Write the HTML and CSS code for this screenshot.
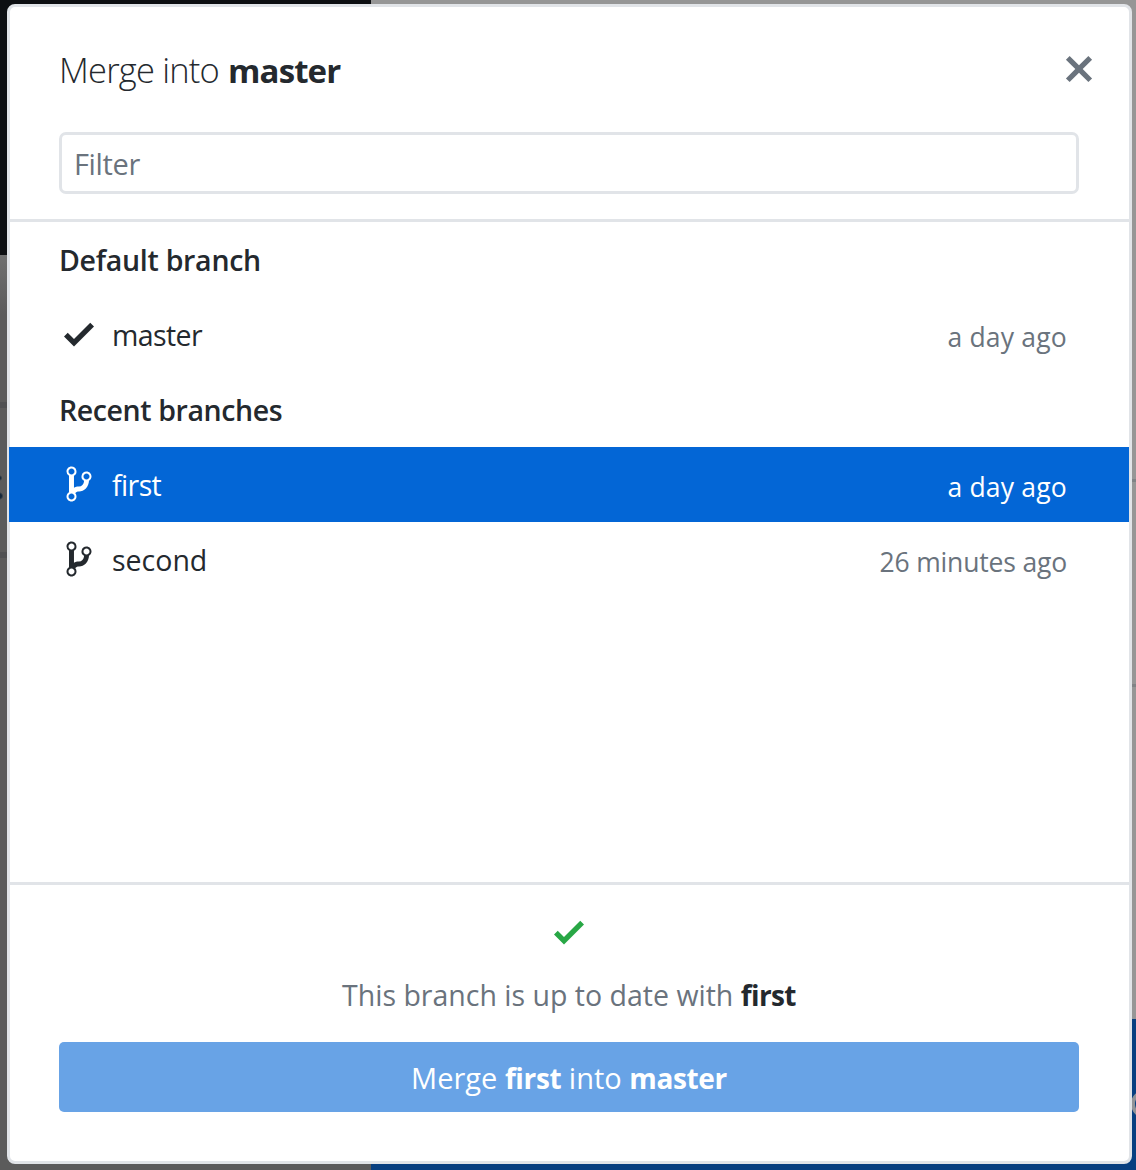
FILE: index.html
```html
<!DOCTYPE html>
<html lang="en">
<head>
<meta charset="utf-8">
<title>Merge into master</title>
<link rel="stylesheet" href="styles.css">
</head>
<body>
<svg width="0" height="0" class="symbols">
  <symbol id="check" viewBox="0 0 12 16"><path d="M12 5l-8 8-4-4 1.5-1.5L4 10l6.5-6.5L12 5z"/></symbol>
  <symbol id="x" viewBox="0 0 12 16"><path d="M7.48 8l3.75 3.75-1.48 1.48L6 9.48l-3.75 3.75-1.48-1.48L4.52 8 .77 4.25l1.48-1.48L6 6.52l3.75-3.75 1.48 1.48z"/></symbol>
  <symbol id="branch" viewBox="0 0 10 16"><path fill-rule="evenodd" d="M10 5c0-1.11-.89-2-2-2a1.993 1.993 0 0 0-1 3.72v.3c-.02.52-.23.98-.63 1.38-.4.4-.86.61-1.38.63-.83.02-1.48.16-2 .45V4.72a1.993 1.993 0 0 0-1-3.72C.88 1 0 1.89 0 3a2 2 0 0 0 1 1.72v6.56c-.59.35-1 .99-1 1.72 0 1.11.89 2 2 2 1.11 0 2-.89 2-2 0-.53-.2-1-.53-1.36.09-.06.48-.41.59-.47.25-.11.56-.17.94-.17 1.05-.05 1.95-.45 2.75-1.25S8.95 7.77 9 6.73h-.02C9.59 6.37 10 5.73 10 5zM2 1.8c.66 0 1.2.55 1.2 1.2 0 .65-.55 1.2-1.2 1.2C1.35 4.2.8 3.65.8 3c0-.65.55-1.2 1.2-1.2zm0 12.41c-.66 0-1.2-.55-1.2-1.2 0-.65.55-1.2 1.2-1.2.65 0 1.2.55 1.2 1.2 0 .65-.55 1.2-1.2 1.2zm6-8c-.66 0-1.2-.55-1.2-1.2 0-.65.55-1.2 1.2-1.2.65 0 1.2.55 1.2 1.2 0 .65-.55 1.2-1.2 1.2z"/></symbol>
</svg>
<div class="backdrop">
  <span class="backdrop-ring"></span>
  <main class="dialog">
    <header class="dialog-header">
      <div class="title-row">
        <h1 class="title">Merge into <strong>master</strong></h1>
        <button class="close" aria-label="Close"><svg class="icon"><use href="#x"/></svg></button>
      </div>
      <input class="filter" type="text" placeholder="Filter">
    </header>
    <section class="list">
      <h2 class="group">Default branch</h2>
      <div class="row">
        <span class="row-icon"><svg class="icon"><use href="#check"/></svg></span>
        <span class="name tight">master</span>
        <span class="time">a day ago</span>
      </div>
      <h2 class="group recent">Recent branches</h2>
      <div class="row selected">
        <span class="row-icon"><svg class="icon"><use href="#branch"/></svg></span>
        <span class="name tight">first</span>
        <span class="time">a day ago</span>
      </div>
      <div class="row">
        <span class="row-icon"><svg class="icon"><use href="#branch"/></svg></span>
        <span class="name">second</span>
        <span class="time long">26 minutes ago</span>
      </div>
    </section>
    <footer class="dialog-footer">
      <svg class="icon status-icon"><use href="#check"/></svg>
      <p class="status">This branch is up to date with <strong>first</strong></p>
      <button class="merge"><span>Merge <strong>first</strong> into <strong>master</strong></span></button>
    </footer>
  </main>
</div>
</body>
</html>
```
FILE: styles.css
```css
* { box-sizing: border-box; }

body {
  margin: 0;
  color: #24292e;
  font-family: "Open Sans", "Noto Sans", sans-serif;
  font-size: 28.5px;
}

h1, h2, p { margin: 0; }

strong { font-weight: 700; }

button {
  padding: 0;
  border: 0;
  font: inherit;
}

.symbols { position: absolute; }

.icon {
  display: block;
  width: 30px;
  height: 40px;
  fill: currentColor;
}

.backdrop {
  position: relative;
  width: 1136px;
  height: 1170px;
  padding: 4px 4px 6px 7px;
  overflow: hidden;
  background:
    linear-gradient(#0d0f12, #0d0f12) 0 0 / 371px 255px no-repeat,
    linear-gradient(#505153, #505153) 0 402px / 8px 6px no-repeat,
    radial-gradient(circle, #14273a 1px, transparent 3px) -4px 474px / 7px 8px no-repeat,
    radial-gradient(circle, #14273a 2px, transparent 4px) -5px 491px / 9px 10px no-repeat,
    linear-gradient(#505153, #505153) 0 552px / 8px 6px no-repeat,
    linear-gradient(#808386, #808386) 1131px 479px / 5px 3px no-repeat,
    linear-gradient(#808386, #808386) 1131px 684px / 5px 3px no-repeat,
    linear-gradient(#083f80, #083f80) 371px 1019px / 765px 151px no-repeat,
    linear-gradient(#707070, #5b5b5b 60px) 0 255px / 371px 915px no-repeat,
    #969696;
}

.backdrop-ring {
  position: absolute;
  top: 1090px;
  left: 1131px;
  width: 28px;
  height: 28px;
  border: 4px solid #919398;
  border-radius: 50%;
}

.dialog {
  position: relative;
  display: flex;
  flex-direction: column;
  height: 1160px;
  border: 3px solid #e1e4e8;
  border-radius: 8px;
  background: #fff;
}

.dialog-header {
  height: 215px;
  padding: 42px 35px 0 49px;
  border-bottom: 3px solid #e1e4e8;
}

.title-row {
  display: flex;
  justify-content: space-between;
  height: 83px;
}

.title {
  font-size: 34.5px;
  font-weight: 300;
  line-height: 42px;
  letter-spacing: -0.8px;
}

.title strong {
  margin-left: 1px;
  font-size: 33px;
  letter-spacing: -0.9px;
}

.close {
  height: 40px;
  background: none;
  color: #6a737d;
}

.filter {
  display: block;
  width: 1020px;
  height: 62px;
  padding: 0 12px;
  border: 3px solid #e1e4e8;
  border-radius: 7px;
  background: #fff;
  font: 29px "Open Sans", "Noto Sans", sans-serif;
  letter-spacing: -0.35px;
}

.filter::placeholder {
  color: #6a737d;
  opacity: 1;
}

.list {
  flex: 1;
  margin-left: -1px;
}

.group {
  height: 75px;
  padding-left: 50px;
  font-size: 28.5px;
  font-weight: 600;
  line-height: 76px;
  letter-spacing: -0.28px;
}

.recent { letter-spacing: -0.4px; }

.row {
  display: flex;
  align-items: center;
  height: 75px;
  padding: 0 62px 0 50px;
}

.selected {
  background: #0366d6;
  color: #fff;
}

.row-icon {
  display: flex;
  justify-content: center;
  width: 40px;
  margin: 0 13px 1px 0;
}

.name {
  flex: 1;
  padding-top: 1px;
}

.tight { letter-spacing: -0.6px; }

.time {
  padding-top: 4px;
  color: #6a737d;
  font-size: 26.5px;
  letter-spacing: 0.2px;
}

.time.long { letter-spacing: -0.17px; }

.selected .time { color: #fff; }

.dialog-footer {
  display: flex;
  flex-direction: column;
  align-items: center;
  height: 279px;
  padding: 27px 50px 0 49px;
  border-top: 3px solid #e1e4e8;
}

.status-icon {
  margin-right: 1px;
  color: #28a745;
}

.status {
  height: 40px;
  margin-top: 23px;
  color: #6a737d;
  line-height: 40px;
}

.status strong {
  color: #24292e;
  font-size: 28px;
  letter-spacing: -0.6px;
}

.merge {
  width: 1020px;
  height: 70px;
  margin-top: 27px;
  border-radius: 5px;
  background: #68a3e6;
  color: #fff;
  font-size: 29px;
}

.merge strong {
  font-size: 28px;
  letter-spacing: -0.35px;
}
```
